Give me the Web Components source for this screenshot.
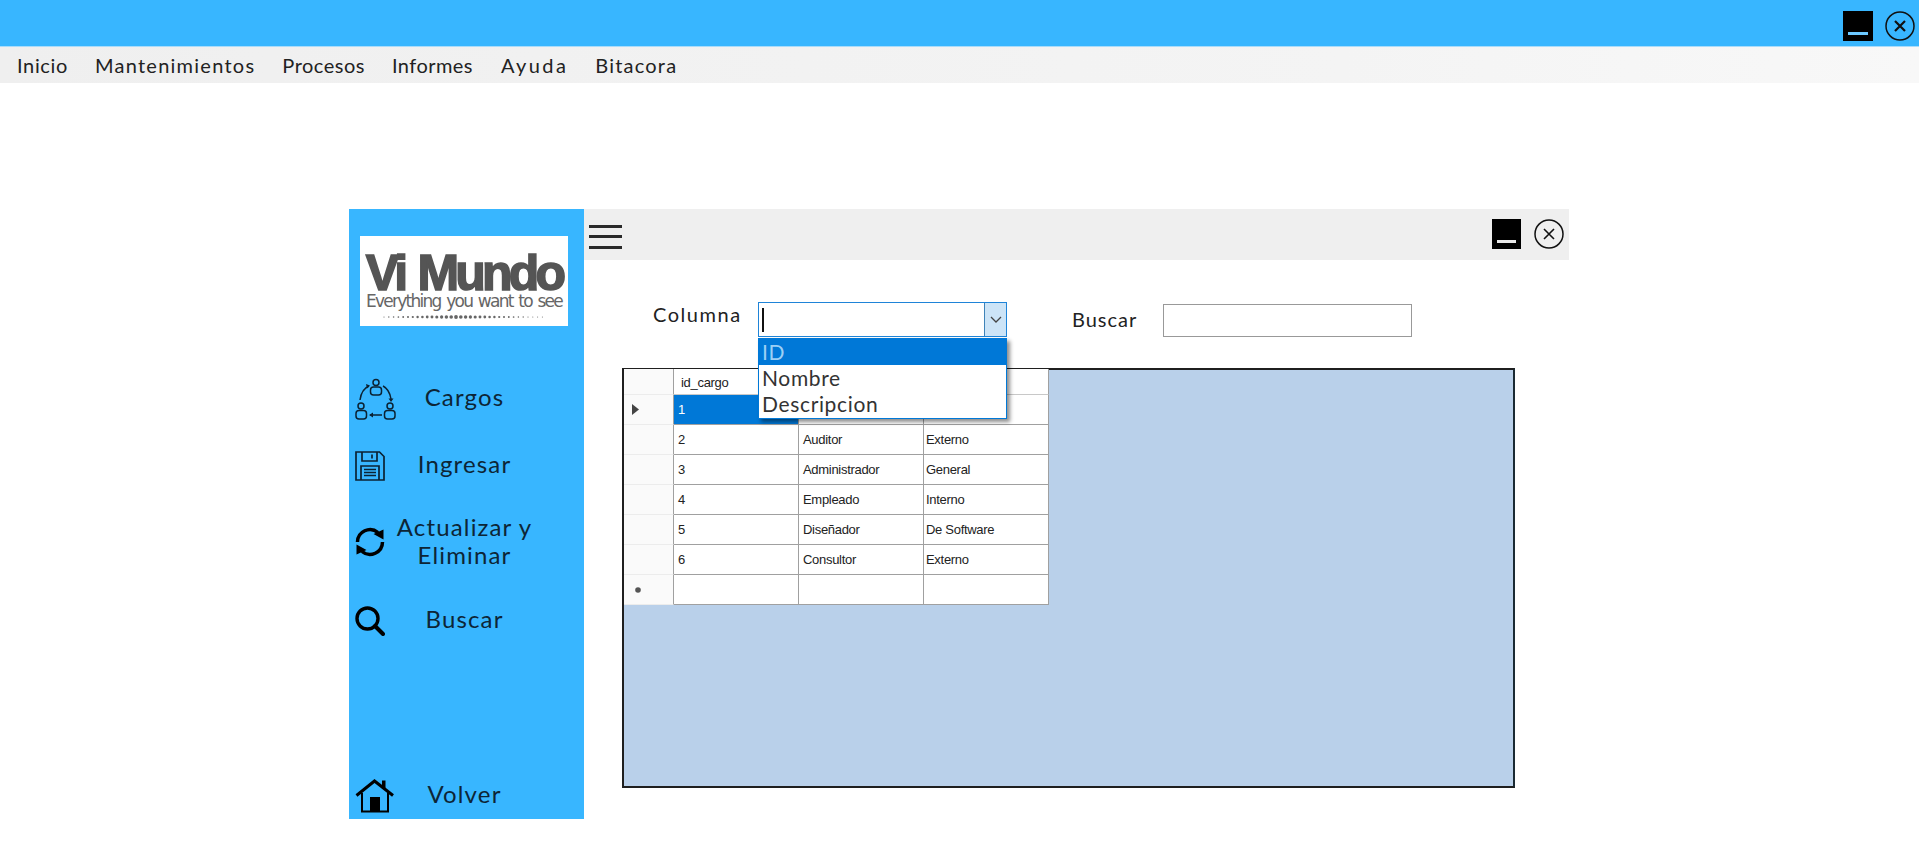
<!DOCTYPE html>
<html lang="es"><head><meta charset="utf-8"><title>Vi Mundo</title>
<style>
html,body{margin:0;padding:0;background:#fff;overflow:hidden}
body{font-family:Lato,"Liberation Sans",sans-serif;color:#1c1c1c;width:1919px;height:857px}
</style></head><body>
<app-shell>
  <title-bar slot="top"></title-bar>
  <menu-bar slot="top">
    <menu-item style="letter-spacing:.65px">Inicio</menu-item><menu-item style="letter-spacing:1.25px">Mantenimientos</menu-item><menu-item style="letter-spacing:.5px">Procesos</menu-item><menu-item style="letter-spacing:.45px">Informes</menu-item><menu-item style="letter-spacing:2.4px;margin-left:1px">Ayuda</menu-item><menu-item style="letter-spacing:1.2px">Bitacora</menu-item>
  </menu-bar>
  <child-window>
    <side-panel slot="side">
      <vi-logo></vi-logo>
      <side-item icon="roles" style="height:44px;margin-top:52px;--up:7px">Cargos</side-item>
      <side-item icon="save" style="height:30px;margin-top:28px">Ingresar</side-item>
      <side-item icon="sync" style="height:60px;margin-top:32px">Actualizar y<br>Eliminar</side-item>
      <side-item icon="search" style="height:30px;margin-top:33px">Buscar</side-item>
      <side-item icon="home" style="height:34px;margin-top:auto;margin-bottom:6px;--up:5px">Volver</side-item>
    </side-panel>
    <search-bar>
      <combo-box label="Columna"></combo-box>
      <search-field label="Buscar"></search-field>
    </search-bar>
    <data-grid></data-grid>
  </child-window>
</app-shell>
<script>
const el=(html)=>{const t=document.createElement('template');t.innerHTML=html;return t;};
function define(name,html,extra){
  const tpl=el(html);
  customElements.define(name,class extends HTMLElement{
    constructor(){super();this.attachShadow({mode:'open'}).appendChild(tpl.content.cloneNode(true));}
    connectedCallback(){if(extra)extra(this);}
  });
}
define('min-button',`<style>:host{display:block;width:var(--w,30px);height:30px;background:#000;box-sizing:border-box;padding-top:21px}
  i{display:block;height:3px;margin:0 5px;background:var(--bar,#6cc8ff)}</style><i></i>`);
define('close-button',`<style>:host{display:block;width:30px;height:30px}svg{display:block}</style>
  <svg width="30" height="30" viewBox="0 0 30 30" fill="none" stroke="#111"><circle cx="15" cy="15" r="14" stroke-width="1.5"/><path d="M10 10l10 10M20 10l-10 10" stroke-width="var(--x,2.2)"/></svg>`);
define('app-shell',`<style>:host{display:block;height:857px}
  main{padding:126px 0 0 349px}</style><slot name="top"></slot><main><slot></slot></main>`);
define('title-bar',`<style>:host{display:flex;align-items:center;justify-content:flex-end;gap:12px;height:46px;background:#38b6ff;padding:0 4px 0 0;border-bottom:1px solid #a9dcfb}
  min-button,close-button{margin-top:6px}</style><min-button></min-button><close-button></close-button>`);
define('menu-bar',`<style>:host{display:flex;height:36px;align-items:center;background:linear-gradient(90deg,#efefef,#f4f4f4 70%,#f8f8f8);padding-left:17px;gap:27px;font:400 20px Lato,sans-serif;color:#222;letter-spacing:.95px}</style><slot></slot>`);
define('menu-item',`<style>:host{display:block;white-space:nowrap;line-height:36px}</style><slot></slot>`);
define('child-window',`<style>:host{display:grid;grid-template-columns:235px 985px;grid-template-rows:51px 108px 420px;width:1220px;height:610px}
  ::slotted([slot=side]){grid-row:1 / span 4}
  header{display:flex;align-items:center;background:#efefef;padding:0 5px 0 5px}
  .h{width:33px;display:flex;flex-direction:column;gap:7.5px;margin-top:4px}.h i{display:block;height:3px;background:#2a2a2a}
  .sp{flex:1}min-button{--bar:#e8e8e8;--w:29px;margin-right:13px;margin-top:-1px}close-button{margin-top:-1px;--x:1.6}
  </style><slot name="side"></slot><header><div class="h"><i></i><i></i><i></i></div><div class="sp"></div><min-button></min-button><close-button></close-button></header><slot></slot>`);
define('side-panel',`<style>:host{display:flex;flex-direction:column;background:#38b6ff;height:610px;box-sizing:border-box;padding-top:27px}</style><slot></slot>`);
define('vi-logo',`<style>:host{display:block;width:208px;height:90px;margin-left:11px;background:#fff;color:#555;overflow:hidden;text-align:center}
  .a{font:700 50px/42px "Liberation Sans",sans-serif;margin-top:16px;letter-spacing:-3.8px;word-spacing:3px;white-space:nowrap;-webkit-text-stroke:1.6px #555}
  .b{font:400 17px/20px "DejaVu Sans",sans-serif;margin-top:-3px;white-space:nowrap;letter-spacing:-1.75px;color:#666;word-spacing:2px}
  svg{display:block;margin:3px auto 0}</style>
  <div class="a">Vi Mundo</div><div class="b">Everything you want to see</div><svg id="d" width="170" height="6"></svg>`,
  (h)=>{const s=h.shadowRoot.getElementById('d');let o='';for(let i=0;i<34;i++){const x=5+i*4.8,r=.5+1.4*Math.max(0,1-Math.abs(i-15)/16);o+=`<circle cx="${x}" cy="3" r="${r.toFixed(2)}" fill="#666"/>`;}s.innerHTML=o;});
const icons={
 roles:`<svg width="41" height="44" viewBox="0 0 41 44" fill="none" stroke="#0b2233" stroke-width="1.5"><circle cx="21" cy="4.5" r="3"/><rect x="15.5" y="9" width="11" height="8" rx="3"/><circle cx="6" cy="28" r="3"/><rect x="1" y="32.5" width="10.5" height="8.5" rx="3"/><circle cx="35" cy="28" r="3"/><rect x="29.5" y="32.5" width="10.5" height="8.5" rx="3"/><path d="M5 22C6 15 9 10 14 8M28 8C32 10 35 15 36 21M27 37H15"/><path d="M11 6l4 1.500-3 3zM33.500 20.500l5 0-2.500 3.500zM18 34.500v5l-4-2.500z" fill="#0b2233" stroke="none"/></svg>`,
 save:`<svg width="30" height="30" viewBox="0 0 30 30" fill="none" stroke="#0b2233" stroke-width="1.700"><path d="M1 1H24.500L29 5.500V29H1z"/><path d="M7 1V10H22V1M17 3.500V7.500" /><path d="M6 29V15H24V29M9 18.500H21M9 21.500H21M9 24.500H21"/></svg>`,
 sync:`<svg width="30" height="30" viewBox="0 0 30 30" fill="none" stroke="#000" stroke-width="3.500"><path d="M2.500 15A12.500 12.500 0 0 1 23 5.500"/><path d="M27.500 15A12.500 12.500 0 0 1 7 24.500"/><path d="M18.500 7L28.500 2.500V12.500zM11.500 23L1.500 27.500V17.500z" fill="#000" stroke="none"/></svg>`,
 search:`<svg width="30" height="30" viewBox="0 0 30 30" fill="none" stroke="#000"><circle cx="12.500" cy="12.500" r="10.500" stroke-width="3.400"/><path d="M20 20l8 8" stroke-width="4" stroke-linecap="round"/></svg>`,
 home:`<svg width="40" height="34" viewBox="0 0 40 34" fill="none" stroke="#000"><path d="M1.500 16.500L19.500 2 38 16.500" stroke-width="3"/><path d="M7 14V32.500H33V14" stroke-width="2"/><path d="M15 32V18H25V32z" fill="#000" stroke="none"/><path d="M27 1.500h3.500v10L27 8.500z" fill="#000" stroke="none"/></svg>`};
customElements.define('side-item',class extends HTMLElement{
  constructor(){super();this.attachShadow({mode:'open'}).innerHTML=`<style>:host{display:grid;grid-template-columns:41px 137px;align-items:center;padding-left:6px;font:400 24px/28px Lato,sans-serif;color:#0d2536;letter-spacing:1.15px;text-align:center;flex:none}
  .i{display:flex;align-items:center;height:100%}svg{display:block}.t{margin-bottom:var(--up,3px)}</style><div class="i">${icons[this.getAttribute('icon')]||''}</div><div class="t"><slot></slot></div>`;}
});
define('search-bar',`<style>:host{display:flex;align-items:flex-start;padding:42px 0 0 69px;position:relative;z-index:2}</style><slot></slot>`);
define('combo-box',`<style>:host{display:flex;font:400 20px/26px Lato,sans-serif;letter-spacing:1.55px;color:#222;position:relative;width:419px;flex:none}
  label{width:105px;flex:none;line-height:24px}
  .box{width:249px;height:35px;box-sizing:border-box;border:1.500px solid #1f84d8;display:flex;background:#fff;position:relative}
  .txt{flex:1;position:relative}.txt i{position:absolute;left:3px;top:5px;bottom:4px;width:1.500px;background:#111}
  .btn{width:21px;background:#cce4f7;border-left:1.500px solid #3f83b8;display:flex;align-items:center;justify-content:center}
  .list{position:absolute;left:105px;top:36px;width:249px;height:81px;box-sizing:border-box;border:1.500px solid #0078d7;background:#fff;box-shadow:3px 3px 4px rgba(0,0,0,.45);font-size:21px;letter-spacing:.65px}
  .o{height:26px;line-height:26px;padding-left:3px;color:#333}.o.s{background:#0078d7;color:#9cd0f5}</style>
  <label id="l"></label><div class="box"><div class="txt"><i></i></div><div class="btn"><svg width="12" height="7" viewBox="0 0 12 7" fill="none" stroke="#444" stroke-width="1.300"><path d="M1 1l5 5 5-5"/></svg></div></div>
  <div class="list"><div class="o s">ID</div><div class="o">Nombre</div><div class="o">Descripcion</div></div>`,
  (h)=>{h.shadowRoot.getElementById('l').textContent=h.getAttribute('label');});
define('search-field',`<style>:host{display:flex;font:400 20px/31px Lato,sans-serif;letter-spacing:1px;color:#222;flex:none;padding-top:2px}
  label{width:91px}div{width:249px;height:33px;box-sizing:border-box;border:1.500px solid #999;background:#fff}</style><label id="l"></label><div></div>`,
  (h)=>{h.shadowRoot.getElementById('l').textContent=h.getAttribute('label');});
const rows=[['1','',''],['2','Auditor','Externo'],['3','Administrador','General'],['4','Empleado','Interno'],['5','Diseñador','De Software'],['6','Consultor','Externo'],['','','']];
customElements.define('data-grid',class extends HTMLElement{
  constructor(){super();
    let c=`<div class="r h"></div><div class="c hc">id_cargo</div><div class="c hc"></div><div class="c hc"></div>`;
    rows.forEach((r,i)=>{
      const mark=i==0?'<svg width="7" height="11" viewBox="0 0 7 11"><path d="M0 0l7 5.500L0 11z" fill="#444"/></svg>':(i==6?'<svg width="8" height="8" viewBox="0 0 8 8" style="margin-left:2px"><circle cx="4" cy="4" r="2.800" fill="#555"/></svg>':'');
      c+=`<div class="r">${mark}</div>`+r.map((v,j)=>`<div class="c${i==0&&j==0?' sel':''}${j==2?' l':''}">${v}</div>`).join('');
    });
    this.attachShadow({mode:'open'}).innerHTML=`<style>:host{display:block;width:893px;height:420px;margin-left:38px;box-sizing:border-box;border:2px solid #1f1f1f;border-right-color:#1a2a33;background:#b9d0ea;position:relative;z-index:1}
    .g{display:grid;grid-template-columns:50px 125px 125px 125px;grid-template-rows:26px repeat(7,30px);width:max-content;font:400 13px/1 "Liberation Sans",sans-serif;letter-spacing:-.3px;color:#222;background:#fff;margin-top:-1px}
    .r{border-right:1.500px solid #a0a0a0;border-bottom:1.500px solid #ececec;background:#fafafa;display:flex;align-items:center;padding-left:8px;box-sizing:border-box}
    .c{border-right:1.500px solid #a0a0a0;border-bottom:1.500px solid #a0a0a0;display:flex;align-items:center;padding-left:4px;box-sizing:border-box;background:#fff}
    .l{padding-left:2px}
    .hc{padding-left:7px;padding-top:2px;border-bottom-color:#c8c8c8}
    .sel{background:#0078d7;color:#fff}</style><div class="g">${c}</div>`;}
});
</script>
</body></html>
